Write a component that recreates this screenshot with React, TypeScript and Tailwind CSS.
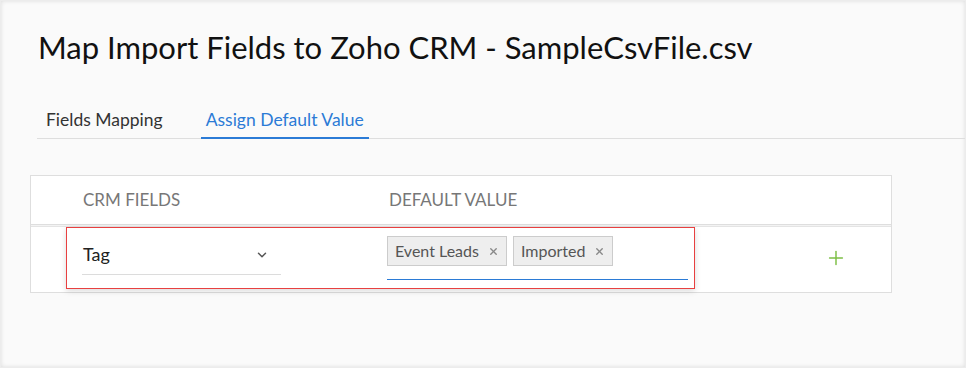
import { ChevronDown, Plus, X } from 'lucide-react';

export default function App() {
  const tags = ["Event Leads", "Imported"];

  return (
    <div
      className="w-[968px] h-[370px] bg-white"
      style={{ fontFamily: 'Lato, "Open Sans", sans-serif' }}
    >
      <div className="w-[966px] h-[368px] bg-[#fafafa] shadow-[inset_0_0_4px_rgba(0,0,0,0.12)] border border-[#ececec] pt-[26px]">
        <h1 className="ml-[37px] text-[31px] leading-[40px] text-[#111]">
          Map Import Fields to Zoho CRM - SampleCsvFile.csv
        </h1>

        <div className="ml-[36px] mt-[41px] flex border-b border-[#dedede] text-[17.5px] leading-[24px]">
          <div className="px-[9px] pb-[6px] text-[#333]">Fields Mapping</div>
          <div className="ml-[29px] px-[5px] pb-[5px] text-[#2b7bd6] border-b-2 border-[#2b7bd6] -mb-px">
            Assign Default Value
          </div>
        </div>

        <div className="ml-[29px] mt-[36px] w-[862px] border border-[#dedede] bg-white">
          <div className="h-[49px] flex items-center border-b border-[#dedede] text-[17px] text-[#777]">
            <div className="ml-[52px] w-[306px]">CRM FIELDS</div>
            <div>DEFAULT VALUE</div>
          </div>
          <div className="h-[1px] bg-[#f3f3f3]" />
          <div className="h-[66px] flex items-start border-t border-[#e4e4e4]">
            <div className="ml-[35px] h-[62px] w-[629px] border border-[#e84040] shadow-[0_2px_6px_rgba(0,0,0,0.15)] bg-white flex">
              <div className="ml-[15px] mt-[11px] w-[199px] h-[36px] border-b border-[#dcdcdc] flex items-start justify-between pt-[3px]">
                <span className="text-[18px] leading-[24px] text-[#222] ml-px">Tag</span>
                <ChevronDown className="w-[14px] h-[14px] mt-[6px] mr-[12px] text-[#555]" strokeWidth={2.5} />
              </div>
              <div className="ml-[106px] mt-[8px] w-[301px] h-[44px] border-b border-[#2b7bd6] flex items-start gap-[6px]">
                {tags.map((t) => (
                  <div
                    key={t}
                    className="h-[30px] px-[7px] flex items-center gap-[9px] bg-[#eeeeee] border border-[#cccccc] text-[16px] text-[#555]"
                  >
                    <span>{t}</span>
                    <X className="w-[11px] h-[11px] text-[#888]" strokeWidth={3} />
                  </div>
                ))}
              </div>
            </div>
            <Plus className="ml-[130px] mt-[20px] w-[22px] h-[22px] text-[#7dbf45]" strokeWidth={1.6} />
          </div>
        </div>
      </div>
    </div>
  );
}
